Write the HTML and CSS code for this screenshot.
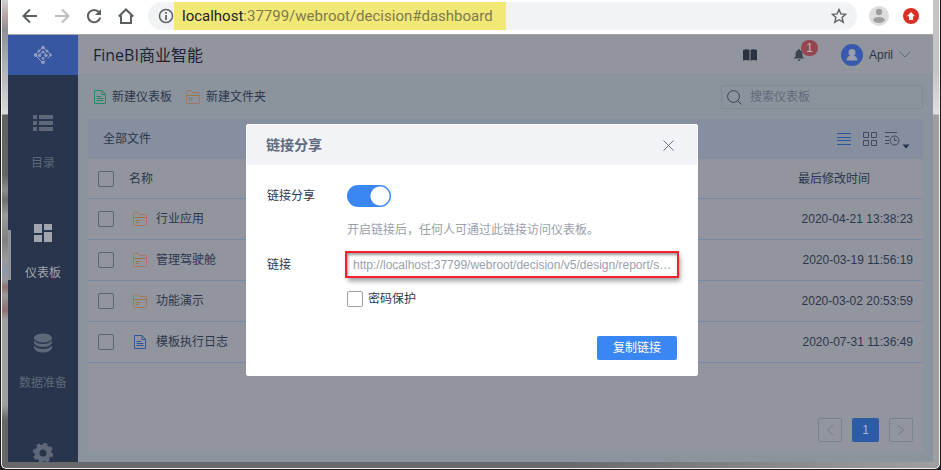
FILE: index.html
```html
<!DOCTYPE html>
<html lang="zh-CN">
<head>
  <meta charset="UTF-8" />
  <title>FineBI商业智能</title>
  <link rel="stylesheet" href="styles.css">
</head>
<body>
  <!-- shared icons -->
  <svg class="sprite" width="0" height="0">
    <symbol id="folder" viewBox="0 0 14 14">
      <path d="M.5 12.500V1.500Q.5.5 1.500.5H5L6.500 2.500H12.500Q13.500 2.500 13.500 3.500V12.500Q13.500 13.500 12.500 13.500H1.500Q.5 13.500.5 12.500" fill="none" stroke="currentColor" />
      <path d="M1 5.500H13M3 8.500H7M3 10.500H5.500" fill="none" stroke="#9a7646" />
    </symbol>
    <symbol id="file" viewBox="0 0 12 14">
      <path d="M8 .5H.5V13.500H11.500V4.500L8 .5V4.500H11.500M2.500 6.500H7M2.500 8.500H9.500M2.500 10.500H9.500" fill="none" stroke="currentColor" />
    </symbol>
  </svg>

  <div class="window">
    <div class="browser-bar">
      <button class="nav-btn" aria-label="后退">
        <svg width="16" height="16" viewBox="0 0 16 16"><path d="M15 8H2M8 1.500L1.500 8L8 14.500" /></svg>
      </button>
      <button class="nav-btn off" aria-label="前进">
        <svg width="16" height="16" viewBox="0 0 16 16"><path d="M1 8H14M8 1.500L14.500 8L8 14.500" /></svg>
      </button>
      <button class="nav-btn" aria-label="刷新">
        <svg width="16" height="16" viewBox="0 0 16 16"><path d="M13 4.200A6.200 6.200 0 1 0 14.200 9.500" /><path class="fill" d="M15 1V7H9Z" /></svg>
      </button>
      <button class="nav-btn" aria-label="主页">
        <svg width="16" height="16" viewBox="0 0 16 16"><path d="M.8 8.500L8 1.500L15.200 8.500M3 7.500V15H13V7.500" /></svg>
      </button>
      <div class="omnibox">
        <svg width="16" height="16" viewBox="0 0 16 16" fill="none" stroke="#5f6368" stroke-width="1.500"><circle cx="8" cy="8" r="6.500" /><path d="M8 7V12M8 4V5.700" stroke-width="1.800" /></svg>
        <div class="url"><span>localhost</span>:37799/webroot/decision#dashboard</div>
        <svg class="star" width="16" height="16" viewBox="0 0 16 16"><path d="M8 1.500L9.900 5.900L14.700 6.300L11.100 9.500L12.200 14.200L8 11.700L3.800 14.200L4.900 9.500L1.300 6.300L6.100 5.900Z" fill="none" stroke="#5f6368" stroke-width="1.400" /></svg>
      </div>
      <svg class="profile" width="20" height="20" viewBox="0 0 20 20"><circle cx="10" cy="10" r="10" fill="#dedede" /><circle cx="10" cy="6" r="3.200" fill="#9e9e9e" /><path d="M4 14Q5 11 10 11T16 14Q14 17 10 17T4 14Z" fill="#9e9e9e" /></svg>
      <svg width="16" height="16" viewBox="0 0 16 16"><circle cx="8" cy="8" r="8" fill="#d93025" /><path d="M8 4L12 8.200H10V12H6V8.200H4Z" fill="#fff" /></svg>
    </div>

    <div class="app">
      <nav class="sidebar">
        <a href="#" class="logo" aria-label="FineBI">
          <svg width="20" height="20" viewBox="0 0 20 20" fill="#949dbb" stroke="#949dbb">
            <path d="M10 2L2 10L10 18L12.500 15.500M10 2L18 10L14.500 13.500M6.500 10L10 6.500L13.500 10" fill="none" />
            <circle cx="10" cy="2.500" r="1.300" /><circle cx="2.500" cy="10" r="1.300" /><circle cx="10" cy="17.500" r="1.300" /><circle cx="17.500" cy="10" r="1" fill="none" />
            <circle cx="10" cy="7" r="1" /><circle cx="6.500" cy="10.500" r="1.300" /><circle cx="13" cy="10.500" r="1.300" /><circle cx="10" cy="13.500" r="1" /><circle cx="6" cy="6" r="1" /><circle cx="14" cy="6" r="1" />
          </svg>
        </a>
        <a href="#" class="side-item">
          <svg width="20" height="20" viewBox="0 0 20 20" fill="currentColor"><path d="M0 2h4v4H0zM6 2h14v4H6zM0 8h4v4H0zM6 8h14v4H6zM0 14h4v4H0zM6 14h14v4H6z" /></svg>
          <span>目录</span>
        </a>
        <a href="#" class="side-item active">
          <svg width="20" height="20" viewBox="0 0 20 20" fill="currentColor"><path d="M1 1h8v9H1zM11 1h8v6H11zM1 12h8v7H1zM11 9h8v10H11z" /></svg>
          <span>仪表板</span>
        </a>
        <a href="#" class="side-item">
          <svg width="20" height="20" viewBox="0 0 20 20" fill="currentColor"><ellipse cx="10" cy="5" rx="9" ry="4.500" /><path d="M1 7.500Q4 11 10 11T19 7.500V10Q17 14 10 14T1 10ZM1 12.500Q4 16 10 16T19 12.500V15Q17 19.500 10 19.500T1 15Z" /></svg>
          <span>数据准备</span>
        </a>
        <a href="#" class="side-item" aria-label="管理系统">
          <svg width="20" height="20" viewBox="0 0 20 20"><circle cx="10" cy="10" r="6" fill="none" stroke="currentColor" stroke-width="5" /><circle cx="10" cy="10" r="9" fill="none" stroke="currentColor" stroke-width="2.400" stroke-dasharray="4 3.070" /></svg>
        </a>
      </nav>

      <main class="main">
        <header class="header">
          <h1>FineBI商业智能</h1>
          <button class="icon-btn" aria-label="帮助">
            <svg width="14" height="12" viewBox="0 0 14 12"><path d="M0 1Q4-.5 6.500 1V11.500Q4 10.500 0 11.500ZM7.500 1Q10-.5 14 1V11.500Q10 10.500 7.500 11.500Z" fill="#2c3340" /></svg>
          </button>
          <button class="icon-btn bell" aria-label="消息">
            <svg width="12" height="12" viewBox="0 0 12 12"><path d="M6 0Q7 0 7 1Q9.500 2 9.500 5V7.500L11.500 9.500H.5L2.500 7.500V5Q2.500 2 5 1Q5 0 6 0ZM4.500 10.500H7.500Q7 12 6 12T4.500 10.500Z" fill="#3d4450" /></svg>
            <span class="badge">1</span>
          </button>
          <button class="user">
            <svg width="22" height="22" viewBox="0 0 22 22"><circle cx="11" cy="11" r="11" fill="#3859ae" /><circle cx="11" cy="8.500" r="3.500" fill="#9a9ea8" /><path d="M5.500 16.500Q6 12.500 9 11.500H13Q16 12.500 16.500 16.500Z" fill="#9a9ea8" /></svg>
            <span>April</span>
            <svg width="12" height="7" viewBox="0 0 12 7"><path d="M.5.5L6 6L11.500.5" fill="none" stroke="#626a7a" /></svg>
          </button>
        </header>

        <div class="toolbar">
          <button class="tool-btn"><svg class="green" width="12" height="14"><use href="#file" /></svg>新建仪表板</button>
          <button class="tool-btn"><svg class="orange" width="14" height="14"><use href="#folder" /></svg>新建文件夹</button>
          <div class="search">
            <svg width="15" height="15" viewBox="0 0 15 15" fill="none" stroke="#3b4353"><circle cx="6.500" cy="6.500" r="5.900" /><path d="M11 11L14.500 14.500" /></svg>
            <input type="text" placeholder="搜索仪表板" aria-label="搜索仪表板">
          </div>
        </div>

        <section class="card">
          <div class="card-head">
            <h2>全部文件</h2>
            <button class="icon-btn" aria-label="列表">
              <svg width="14" height="14" viewBox="0 0 14 14"><path d="M0 1.500H14M0 5.500H14M0 8.500H14M0 12.500H14" stroke="#2f5699" /></svg>
            </button>
            <button class="icon-btn" aria-label="平铺">
              <svg width="14" height="14" viewBox="0 0 14 14"><path d="M.5.5h5v5h-5zM8.500.5h5v5h-5zM.5 8.500h5v5h-5zM8.500 8.500h5v5h-5z" fill="none" stroke="#434a59" /></svg>
            </button>
            <button class="icon-btn sort" aria-label="排序">
              <svg width="25" height="20" viewBox="0 0 25 20" fill="none" stroke="#434a59"><path d="M0 3.500H12M0 7.500H4M0 11.500H4M0 14.500H4M9.500 8.500V11.500H12" /><circle cx="9.500" cy="11.500" r="4.500" /><path d="M17.500 15.500H24.500L21 19.500Z" fill="#253049" stroke="none" /></svg>
            </button>
          </div>

          <table class="files">
            <thead>
              <tr>
                <th class="col-check"><input type="checkbox" aria-label="全选"></th>
                <th>名称</th>
                <th class="col-time">最后修改时间</th>
              </tr>
            </thead>
            <tbody>
              <tr>
                <td><input type="checkbox" aria-label="行业应用"></td>
                <td><a href="#" class="file"><svg class="orange" width="14" height="14"><use href="#folder" /></svg>行业应用</a></td>
                <td class="time">2020-04-21 13:38:23</td>
              </tr>
              <tr>
                <td><input type="checkbox" aria-label="管理驾驶舱"></td>
                <td><a href="#" class="file"><svg class="orange" width="14" height="14"><use href="#folder" /></svg>管理驾驶舱</a></td>
                <td class="time">2020-03-19 11:56:19</td>
              </tr>
              <tr>
                <td><input type="checkbox" aria-label="功能演示"></td>
                <td><a href="#" class="file"><svg class="orange" width="14" height="14"><use href="#folder" /></svg>功能演示</a></td>
                <td class="time">2020-03-02 20:53:59</td>
              </tr>
              <tr>
                <td><input type="checkbox" aria-label="模板执行日志"></td>
                <td><a href="#" class="file"><svg class="blue" width="14" height="14"><use href="#file" /></svg>模板执行日志</a></td>
                <td class="time">2020-07-31 11:36:49</td>
              </tr>
            </tbody>
          </table>

          <div class="pager">
            <button aria-label="上一页"><svg width="8" height="12" viewBox="0 0 8 12"><path d="M7 1L1.500 6L7 11" /></svg></button>
            <button class="current">1</button>
            <button aria-label="下一页"><svg width="8" height="12" viewBox="0 0 8 12"><path d="M1 1L6.500 6L1 11" /></svg></button>
          </div>
        </section>
      </main>

      <div class="overlay">
        <div class="dialog" role="dialog" aria-labelledby="dialogTitle">
          <div class="dialog-head">
            <h2 id="dialogTitle">链接分享</h2>
            <button class="icon-btn" aria-label="关闭">
              <svg width="11" height="11" viewBox="0 0 11 11"><path d="M.5.5L10.500 10.500M10.500.5L.5 10.500" stroke="#6b7482" /></svg>
            </button>
          </div>
          <form class="dialog-body">
            <div class="form-row">
              <label for="share">链接分享</label>
              <input type="checkbox" id="share" class="switch" checked>
            </div>
            <p class="hint">开启链接后，任何人可通过此链接访问仪表板。</p>
            <div class="form-row">
              <label for="link">链接</label>
              <input type="text" id="link" class="link-input" readonly value="http://localhost:37799/webroot/decision/v5/design/report/s…">
            </div>
            <div class="protect">
              <input type="checkbox" id="protect">
              <label for="protect">密码保护</label>
            </div>
            <button type="button" class="copy-btn">复制链接</button>
          </form>
        </div>
      </div>
    </div>
  </div>
</body>
</html>
```
FILE: styles.css
```css
* {
  box-sizing: border-box;
}

body {
  margin: 0;
  background: #1c1c1e;
  font-family: "Liberation Sans", "Noto Sans CJK SC", sans-serif;
  font-size: 12px;
  line-height: 20px;
  color: #2c374d;
}

h1, h2, p {
  margin: 0;
}

a {
  color: inherit;
  text-decoration: none;
}

button {
  padding: 0;
  border: none;
  background: none;
  font: inherit;
  color: inherit;
  cursor: pointer;
}

svg {
  display: block;
  flex: none;
}

.sprite {
  position: absolute;
}

/* browser window */
.window {
  display: flex;
  flex-direction: column;
  height: 100vh;
  padding: 0 7px 7px;
  border: 1px solid #1c1c1e;
  border-top: none;
  border-radius: 0 0 6px 6px;
  box-shadow: inset 0 -1px 0 #f0f0f0, inset 1px 0 0 #f0f0f0, inset -1px 0 0 #f0f0f0;
  background:
    linear-gradient(#c4c4c4 0 70px, #e0e0e0 114px, #9f9f9f 115px) right / 8px 100% no-repeat,
    linear-gradient(#d0d0d0, #b8a5a5 16px, #8e9096 30px, #dadada 114px, #606060 115px, #666 175px, #8c8c8c 190px, #707070 200px, #9b9b9b 215px, #808080 240px, #9a9a9a 260px, #8b97ab 270px, #9a9a9a 280px, #936f70 287px, #999 295px, #936f70 310px, #a0a09e 320px, #a0a09e 405px, #666 420px) left / 8px 100% no-repeat,
    linear-gradient(90deg, #67696c 60%, #a0a0a0);
}

.browser-bar {
  display: flex;
  flex: none;
  align-items: center;
  height: 35px;
  padding: 0 14px 2px;
  border-bottom: 1px solid #a8a8a8;
  background: #fff;
}

.nav-btn {
  margin-right: 16px;
}

.nav-btn path {
  fill: none;
  stroke: #5a5d61;
  stroke-width: 2;
}

.nav-btn .fill {
  fill: #5a5d61;
  stroke: none;
}

.nav-btn.off path {
  stroke: #bdbdbd;
}

.omnibox {
  display: flex;
  flex: 1;
  align-items: center;
  height: 28px;
  margin-right: 12px;
  margin-left: -2px;
  padding: 0 10px;
  border-radius: 14px;
  background: #f1f3f4;
}

.url {
  width: 332px;
  padding-left: 8px;
  background: #f1e876;
  font-family: Roboto, sans-serif;
  font-size: 15px;
  line-height: 28px;
  white-space: nowrap;
  color: #7d7a4c;
}

.url span {
  color: #222;
}

.star {
  margin-left: auto;
}

.profile {
  margin-right: 14px;
}

.app {
  position: relative;
  display: flex;
  flex: 1;
  min-height: 0;
  overflow: hidden;
}

/* sidebar */
.sidebar {
  flex: none;
  width: 70px;
  overflow: hidden;
  background: #29354d;
}

.logo {
  display: flex;
  align-items: center;
  justify-content: center;
  height: 40px;
  background: #3857a2;
}

.side-item {
  position: relative;
  display: flex;
  flex-direction: column;
  align-items: center;
  gap: 20px;
  height: 110px;
  padding-top: 38px;
  color: #5e687a;
}

.side-item.active {
  color: #a0a5af;
}

.side-item.active::before {
  content: "";
  position: absolute;
  top: 45px;
  left: 0;
  width: 3px;
  height: 50px;
  background: #92959e;
}

/* main */
.main {
  display: flex;
  flex: 1;
  flex-direction: column;
  padding-bottom: 10px;
  background: #8b939d;
}

.header {
  display: flex;
  align-items: center;
  height: 40px;
  padding: 0 22px 0 15px;
  border-bottom: 1px solid #8c909a;
  background: #92959e;
}

.header h1 {
  margin-right: auto;
  font-family: "Open Sans", "Noto Sans CJK SC", sans-serif;
  font-size: 16px;
  font-weight: normal;
  color: #1c2330;
}

.bell {
  position: relative;
  margin: 0 36px;
}

.badge {
  position: absolute;
  top: -9px;
  left: 8px;
  width: 17px;
  border-radius: 8px;
  background: #96464f;
  line-height: 16px;
  color: #c5b4ba;
}

.user {
  display: flex;
  align-items: center;
  gap: 6px;
}

.toolbar {
  display: flex;
  align-items: center;
  gap: 14px;
  height: 44px;
  padding: 0 10px 0 16px;
}

.tool-btn {
  display: flex;
  align-items: center;
  gap: 6px;
}

.green {
  color: #258a62;
}

.orange {
  color: #a8765f;
}

.blue {
  color: #2f5699;
}

.search {
  display: flex;
  align-items: center;
  gap: 8px;
  width: 202px;
  height: 24px;
  margin-left: auto;
  padding: 0 5px;
  border: 1px solid #828994;
  border-radius: 2px;
}

.search input {
  flex: 1;
  min-width: 0;
  padding: 0;
  border: none;
  outline: none;
  background: none;
  font: inherit;
}

.search input::placeholder {
  color: #626a7a;
}

.card {
  display: flex;
  flex: 1;
  flex-direction: column;
  margin: 0 10px;
  background: #92959e;
}

.card-head {
  display: flex;
  align-items: center;
  gap: 12px;
  height: 40px;
  padding: 0 13px 0 15px;
  background: #858f9f;
}

.card-head h2 {
  margin-right: auto;
  font-size: 12px;
  font-weight: normal;
}

.sort {
  margin-left: -4px;
}

.files {
  width: 100%;
  border-collapse: separate;
  border-spacing: 0;
}

.files th,
.files td {
  height: 41px;
  padding: 0;
  border-bottom: 1px solid #7889a5;
  font-weight: normal;
  text-align: left;
}

.files th {
  height: 40px;
}

.files .col-check {
  width: 41px;
}

.files .col-time {
  width: 125px;
}

.files .time {
  padding-right: 10px;
  text-align: right;
}

.files input,
.protect input {
  appearance: none;
  display: block;
  width: 16px;
  height: 16px;
  margin: 0;
  border: 1px solid #5c6474;
  border-radius: 2px;
}

.files input {
  margin-left: 10px;
}

.file {
  display: flex;
  align-items: center;
  gap: 9px;
  padding-left: 4px;
}

.pager {
  display: flex;
  gap: 10px;
  justify-content: flex-end;
  margin-top: auto;
  padding: 10px;
}

.pager button {
  display: flex;
  align-items: center;
  justify-content: center;
  width: 24px;
  height: 24px;
  border: 1px solid #7c818e;
  border-radius: 2px;
}

.pager .current {
  width: 27px;
  border: none;
  background: #2d5ca6;
  color: #a9b7ce;
}

.pager path {
  fill: none;
  stroke: #747a88;
}

/* share dialog */
.overlay {
  position: absolute;
  inset: 0;
  display: flex;
  align-items: flex-start;
  justify-content: center;
  padding: 89px 0 0 3px;
}

.dialog {
  width: 452px;
  border: 1px solid #fff;
  border-radius: 2px;
  background: #fff;
}

.dialog-head {
  display: flex;
  align-items: center;
  justify-content: space-between;
  height: 40px;
  padding: 0 23px 0 19px;
  background: #f2f3f7;
}

.dialog-head h2 {
  font-size: 14px;
  color: #5f6a7d;
}

.dialog-body {
  display: flex;
  flex-direction: column;
  gap: 13px;
  padding: 20px 20px 15px;
}

.form-row {
  display: grid;
  grid-template-columns: 80px 1fr;
  align-items: center;
}

.switch {
  appearance: none;
  width: 44px;
  height: 22px;
  margin: 0;
  border-radius: 11px;
  background: radial-gradient(circle at 33px 11px, #fff 9px, #3a86f2 10px);
}

.hint {
  padding-left: 80px;
  color: #9aa0ac;
}

.link-input {
  width: 100%;
  height: 23px;
  padding: 0 6px;
  border: none;
  outline: 2px solid #f5222d;
  background: #fff;
  box-shadow: 2px 4px 5px 1px rgba(0, 0, 0, 0.4), inset 1px 2px 3px rgba(0, 0, 0, 0.4);
  font: inherit;
  color: #9aa0ac;
}

.protect {
  display: flex;
  align-items: center;
  gap: 5px;
  margin-left: 80px;
}

.protect input {
  border-color: #9aa0ac;
}

.copy-btn {
  align-self: flex-end;
  width: 80px;
  height: 24px;
  margin-top: 14px;
  border-radius: 2px;
  background: #3a86f2;
  color: #fff;
}
```
